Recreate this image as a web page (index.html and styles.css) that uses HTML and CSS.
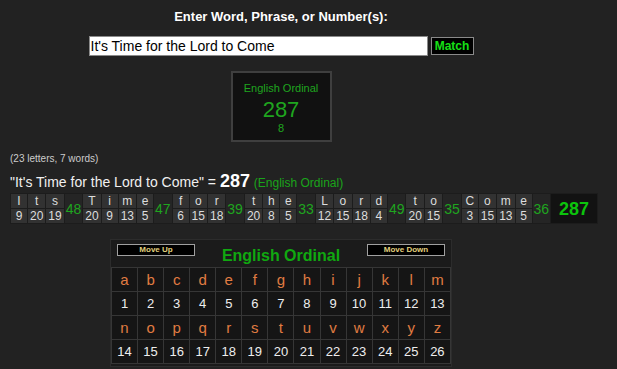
FILE: index.html
```html
<!DOCTYPE html>
<html lang="en">
<head>
  <meta charset="UTF-8">
  <title>Gematria Calculator</title>
  <link rel="stylesheet" href="styles.css">
</head>
<body>
  <div class="main">
    <div class="prompt">Enter Word, Phrase, or Number(s):</div>
    <div class="search">
      <input class="phrase" type="text" value="It's Time for the Lord to Come">
      <button class="match">Match</button>
    </div>
    <div class="result-box">
      <div class="cipher-name">English Ordinal</div>
      <div class="cipher-total">287</div>
      <div class="cipher-reduced">8</div>
    </div>
  </div>

  <div class="details">
    <div class="counts">(23 letters, 7 words)</div>
    <div class="summary">"It's Time for the Lord to Come" = <b>287</b> <span class="summary-cipher">(English Ordinal)</span></div>
    <table class="breakdown">
      <tr>
        <td class="ch">I</td><td class="ch">t</td><td class="ch">s</td><td class="word" rowspan="2">48</td>
        <td class="ch">T</td><td class="ch">i</td><td class="ch">m</td><td class="ch">e</td><td class="word" rowspan="2">47</td>
        <td class="ch">f</td><td class="ch">o</td><td class="ch">r</td><td class="word" rowspan="2">39</td>
        <td class="ch">t</td><td class="ch">h</td><td class="ch">e</td><td class="word" rowspan="2">33</td>
        <td class="ch">L</td><td class="ch">o</td><td class="ch">r</td><td class="ch">d</td><td class="word" rowspan="2">49</td>
        <td class="ch">t</td><td class="ch">o</td><td class="word" rowspan="2">35</td>
        <td class="ch">C</td><td class="ch">o</td><td class="ch">m</td><td class="ch">e</td><td class="word" rowspan="2">36</td>
        <td class="grand" rowspan="2">287</td>
      </tr>
      <tr>
        <td class="val">9</td><td class="val">20</td><td class="val">19</td>
        <td class="val">20</td><td class="val">9</td><td class="val">13</td><td class="val">5</td>
        <td class="val">6</td><td class="val">15</td><td class="val">18</td>
        <td class="val">20</td><td class="val">8</td><td class="val">5</td>
        <td class="val">12</td><td class="val">15</td><td class="val">18</td><td class="val">4</td>
        <td class="val">20</td><td class="val">15</td>
        <td class="val">3</td><td class="val">15</td><td class="val">13</td><td class="val">5</td>
      </tr>
    </table>
  </div>

  <div class="cipher-chart">
    <div class="chart-head">
      <button class="move">Move Up</button>
      <div class="chart-title">English Ordinal</div>
      <button class="move">Move Down</button>
    </div>
    <table class="chart">
      <tr class="letters">
        <td>a</td><td>b</td><td>c</td><td>d</td><td>e</td><td>f</td><td>g</td><td>h</td><td>i</td><td>j</td><td>k</td><td>l</td><td>m</td>
      </tr>
      <tr class="values">
        <td>1</td><td>2</td><td>3</td><td>4</td><td>5</td><td>6</td><td>7</td><td>8</td><td>9</td><td>10</td><td>11</td><td>12</td><td>13</td>
      </tr>
      <tr class="letters">
        <td>n</td><td>o</td><td>p</td><td>q</td><td>r</td><td>s</td><td>t</td><td>u</td><td>v</td><td>w</td><td>x</td><td>y</td><td>z</td>
      </tr>
      <tr class="values">
        <td>14</td><td>15</td><td>16</td><td>17</td><td>18</td><td>19</td><td>20</td><td>21</td><td>22</td><td>23</td><td>24</td><td>25</td><td>26</td>
      </tr>
    </table>
  </div>
</body>
</html>
```

FILE: styles.css
```css
body {
  margin: 0;
  background-color: #222;
  font-family: "Liberation Sans", Arial, sans-serif;
  color: #fff;
  overflow: hidden;
}

.main {
  width: 562px;
  display: flex;
  flex-direction: column;
  align-items: center;
}

.prompt {
  padding-top: 9px;
  font-size: 13px;
  line-height: 15px;
  font-weight: bold;
}

.search {
  display: flex;
  align-items: center;
  gap: 3px;
  margin-top: 12px;
}

.phrase {
  box-sizing: border-box;
  width: 339px;
  height: 20px;
  margin: 0;
  padding: 0 1px;
  border: 1px solid #8a8a8a;
  background: #fff;
  color: #000;
  font-family: "Liberation Sans", Arial, sans-serif;
  font-size: 14px;
}

.match {
  box-sizing: border-box;
  width: 43px;
  height: 18px;
  margin: 0;
  padding: 0;
  border: 1px solid #8a8a8a;
  background: #000;
  color: #16e016;
  font-family: "Liberation Sans", Arial, sans-serif;
  font-size: 12px;
  font-weight: bold;
}

.result-box {
  box-sizing: border-box;
  width: 101px;
  height: 71px;
  margin-top: 15px;
  padding-top: 9px;
  border: 2px solid #3f3f3f;
  background: #111;
  color: #1fa51f;
  text-align: center;
}

.cipher-name {
  font-size: 11px;
  line-height: 13px;
}

.cipher-total {
  margin-top: 2px;
  font-size: 22px;
  line-height: 26px;
}

.cipher-reduced {
  font-size: 11px;
  line-height: 11px;
}

.details {
  padding-left: 10px;
}

.counts {
  margin-top: 11px;
  font-size: 10px;
  line-height: 12px;
  color: #ccc;
}

.summary {
  margin-top: 7px;
  font-size: 14px;
  line-height: 18px;
  color: #f0f0f0;
}

.summary b {
  font-size: 18px;
  color: #fff;
}

.summary-cipher {
  font-size: 12px;
  color: #1aa51a;
}

.breakdown {
  margin-top: 1px;
  border-collapse: separate;
  border-spacing: 1px;
  background: #1c1c1c;
  text-align: center;
}

.breakdown td {
  padding: 0 2px;
  line-height: 14px;
}

.ch,
.val {
  min-width: 12px;
  background: #323232;
  color: #ddd;
  font-size: 12px;
}

.breakdown .word {
  padding: 0 1px;
  background: #252525;
  color: #1fa51f;
  font-size: 14px;
}

.breakdown .grand {
  padding: 0 8px;
  background: #121212;
  color: #0cc40c;
  font-size: 18px;
  font-weight: bold;
}

.cipher-chart {
  width: 340px;
  margin: 15px 0 0 110px;
  padding: 0 0 2px;
  border: 1px solid #2c2c2c;
  background: #1b1b1b;
}

.chart-head {
  display: flex;
  justify-content: space-between;
  align-items: flex-start;
  height: 27px;
  padding: 4px 6px 0;
  box-sizing: border-box;
}

.move {
  box-sizing: border-box;
  width: 78px;
  height: 12px;
  margin: 0;
  padding: 0;
  border: 1px solid #a0a0a0;
  background: #000;
  color: #e2d07c;
  font-family: "Liberation Sans", Arial, sans-serif;
  font-size: 8px;
  font-weight: bold;
  line-height: 10px;
}

.chart-title {
  margin-top: 3px;
  font-size: 16px;
  line-height: 18px;
  font-weight: bold;
  color: #10a810;
}

.chart {
  width: 340px;
  border-collapse: collapse;
  table-layout: fixed;
  text-align: center;
}

.chart td {
  height: 23px;
  padding: 0;
  border: 1px solid #363636;
  background: #151515;
}

.letters td {
  font-size: 15px;
  color: #e07c42;
}

.values td {
  font-size: 13px;
  color: #eee;
}
```
